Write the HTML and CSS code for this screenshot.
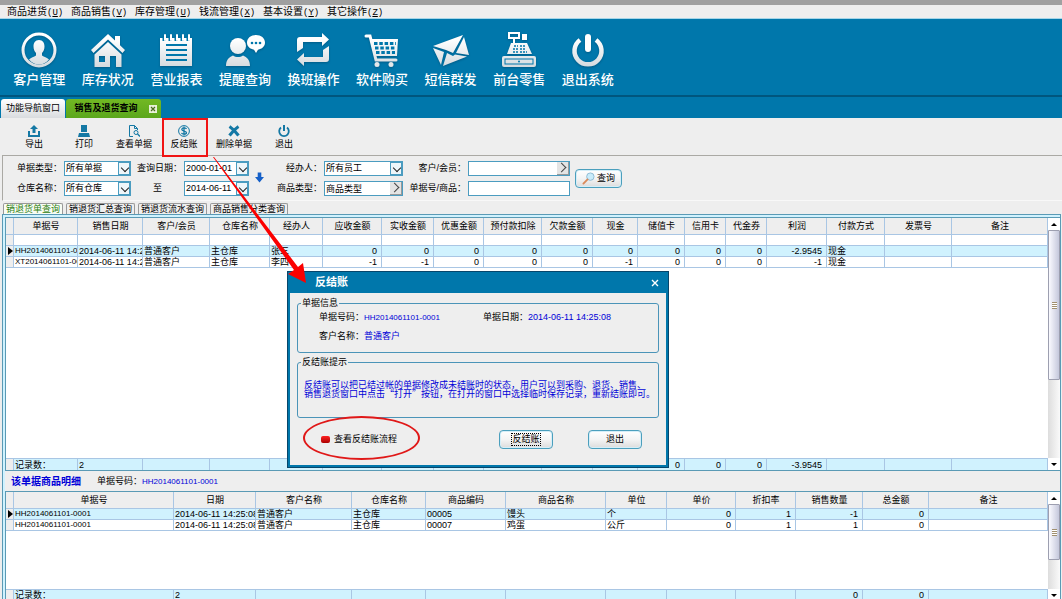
FILE: index.html
```html
<!DOCTYPE html>
<html lang="zh-CN">
<head>
    <meta charset="UTF-8">
    <meta name="viewport" content="width=device-width, initial-scale=1.0">
    <title>销售及退货查询</title>
    <link rel="stylesheet" href="styles.css">
</head>
<body>

<!-- shared gradient for the big toolbar icons -->
<svg class="defs" width="0" height="0" aria-hidden="true">
    <defs>
        <linearGradient id="silver" x1="0" y1="0" x2="0" y2="36" gradientUnits="userSpaceOnUse">
            <stop offset="0.2" stop-color="#ffffff"/>
            <stop offset="1" stop-color="#d3d9dd"/>
        </linearGradient>
    </defs>
</svg>

<nav class="menu-bar">
    <a href="#">商品进货<span>(<u>U</u>)</span></a>
    <a href="#">商品销售<span>(<u>V</u>)</span></a>
    <a href="#">库存管理<span>(<u>U</u>)</span></a>
    <a href="#">钱流管理<span>(<u>X</u>)</span></a>
    <a href="#">基本设置<span>(<u>Y</u>)</span></a>
    <a href="#">其它操作<span>(<u>Z</u>)</span></a>
</nav>

<header class="main-bar">
    <div class="main-items">
        <button class="main-btn">
            <svg viewBox="0 0 36 36"><circle cx="18" cy="18" r="16" fill="none" stroke="url(#silver)" stroke-width="3"/><path d="M18 8c-4 0-5.500 3-5.500 6.500 0 3 1 5 2.500 6.500v2.500c-2 1.500-5 2-7 4C11 31 14 32.500 18 32.500S25 31 28 27.500c-2-2-5-2.500-7-4V21c1.500-1.500 2.500-3.500 2.500-6.500C23.500 11 22 8 18 8z" fill="url(#silver)"/></svg>
            客户管理
        </button>
        <button class="main-btn">
            <svg viewBox="0 0 36 36"><path d="M18 2 1 18l2.500 3L18 7.500 32.500 21l2.500-3-5-4.700V4h-5v4.500z" fill="url(#silver)"/><path d="M18 10 4.500 22.500V35H20V24h6v11h5.500V22.500zM9 24h6v6H9z" fill="url(#silver)"/></svg>
            库存状况
        </button>
        <button class="main-btn">
            <svg viewBox="0 0 36 36"><path d="M2 6h32v28H2z" fill="url(#silver)"/><path d="M8 13h21M8 18h21M8 23h21M8 28h21" stroke="#0077ab" stroke-width="2"/><path d="M6 5v4M12 5v4M18 5v4M24 5v4M30 5v4" stroke="#0077ab" stroke-width="3"/><path d="M7 3v5M13 3v5M19 3v5M25 3v5M31 3v5" stroke="#fff" stroke-width="2" stroke-linecap="round"/></svg>
            营业报表
        </button>
        <button class="main-btn">
            <svg viewBox="0 0 40 36"><circle cx="13" cy="14" r="8" fill="url(#silver)"/><path d="M1 34c0-6 3-9 7-10.500 3 2 7 2 10 0C22 25 25 28 25 34z" fill="url(#silver)"/><path d="M31 3c5 0 9 3 9 7.500 0 4-3 6.500-7 7.200L31 21l-2-3.300c-4-.7-7-3.200-7-7.200C22 6 26 3 31 3z" fill="#fff"/><g fill="#0077ab"><circle cx="27" cy="11" r="1.300"/><circle cx="31" cy="11" r="1.300"/><circle cx="35" cy="11" r="1.300"/></g></svg>
            提醒查询
        </button>
        <button class="main-btn">
            <svg viewBox="0 0 36 36"><path d="M2 20V8q0-3 3-3h22V1l7 6.500-7 6.500v-4H8v6z" fill="url(#silver)"/><path d="M34 14v13q0 3-3 3H9v4l-7-6.500L9 21v4h19v-7z" fill="url(#silver)"/></svg>
            换班操作
        </button>
        <button class="main-btn">
            <svg viewBox="0 0 36 36"><path d="M2 4h4l6 24h20" fill="none" stroke="url(#silver)" stroke-width="3" stroke-linecap="round"/><path d="M7 7h27l-1 17H11z" fill="url(#silver)"/><path d="M10 11.500h22M11 16h21M12 20.500h19" stroke="#0077ab" stroke-width="3" stroke-dasharray="3.500 1.800"/><circle cx="13" cy="32.500" r="2.500" fill="#e4e8ea"/><circle cx="27" cy="32.500" r="2.500" fill="#e4e8ea"/></svg>
            软件购买
        </button>
        <button class="main-btn">
            <svg viewBox="0 0 36 36"><path d="M0 14 30 3l-10 18-7-3z" fill="url(#silver)"/><path d="M0 16l11 4-3 13zM31 5l5 18-13-2z" fill="url(#silver)"/><path d="M10 34l4-13 6 3 2-1.500 12 2z" fill="url(#silver)"/></svg>
            短信群发
        </button>
        <button class="main-btn">
            <svg viewBox="0 0 36 36"><path d="M8 1h10v5H8zM13 6v6" fill="none" stroke="#fff" stroke-width="2"/><path d="M21 2h5v6h-5z" fill="#fff"/><path d="M10 11h16l5 11H6z" fill="url(#silver)"/><path d="M13 14h4M19 14h6M12 17h5M19 17h6M12 20h5M19 20h7" stroke="#0077ab" stroke-width="1.500" stroke-dasharray="2 1"/><rect x="1" y="24" width="34" height="11" rx="2" fill="url(#silver)"/><rect x="4" y="27" width="28" height="5" fill="none" stroke="#0077ab" stroke-width="1"/><circle cx="18" cy="29.500" r="1" fill="#0077ab"/></svg>
            前台零售
        </button>
        <button class="main-btn">
            <svg viewBox="0 0 36 36"><path d="M10 8A13.500 13.500 0 1 0 26 8" fill="none" stroke="url(#silver)" stroke-width="4.500"/><path d="M18 5v12" stroke="#fff" stroke-width="6" stroke-linecap="round"/></svg>
            退出系统
        </button>
    </div>
</header>

<div class="page-tabs">
    <button class="page-tab">功能导航窗口</button>
    <div class="page-tab active">销售及退货查询
        <button class="tab-close" aria-label="关闭"><svg viewBox="0 0 8 8"><path d="M2 2l4 4M6 2 2 6" stroke="#4a6b20" stroke-width="1.200"/></svg></button>
    </div>
</div>

<div class="tool-bar">
    <button class="tool"><svg viewBox="0 0 12 12"><path d="M6 0l4 4H7.500v4h-3V4H2z"/><path d="M0 6h2v4h8V6h2v6H0z"/></svg>导出</button>
    <button class="tool"><svg viewBox="0 0 12 12"><path d="M3 0h6v7H3zM1 8h10l1 4H0z"/></svg>打印</button>
    <button class="tool"><svg viewBox="0 0 12 12"><path d="M1.500.5h5l3 3V5M5 11.500H1.500V.5M6.500.5v3h3" fill="none" stroke="#1478a4"/><circle cx="8" cy="7.500" r="2" fill="none" stroke="#1478a4"/><path d="M9.500 9 12 11.500" stroke="#1478a4" stroke-width="1.300"/></svg>查看单据</button>
    <button class="tool"><svg viewBox="0 0 12 12"><circle cx="6" cy="6" r="5.400" fill="none" stroke="#1478a4"/><path d="M8.500 4C8 2.500 3.800 2.500 3.800 4.400S8.500 5.800 8.500 7.700 4 9.600 3.500 7.900M6 1.500v9" fill="none" stroke="#1478a4" stroke-width="1.300"/></svg>反结账</button>
    <button class="tool"><svg viewBox="0 0 12 12"><path d="M1.500 1.500c3 2 6 5 9 9M10.500 1.500c-3 2-6 5-9 9" fill="none" stroke="#1478a4" stroke-width="3"/></svg>删除单据</button>
    <button class="tool"><svg viewBox="0 0 12 12"><path d="M3 2.500a4.800 4.800 0 1 0 6 0" fill="none" stroke="#1478a4" stroke-width="1.800"/><path d="M6 0v6" stroke="#1478a4" stroke-width="2"/></svg>退出</button>
</div>

<form class="filters">
    <label for="billType">单据类型：</label>
    <span class="combo"><select id="billType"><option>所有单据</option></select><i class="drop"></i></span>
    <label for="dateFrom">查询日期：</label>
    <span class="combo date"><select id="dateFrom"><option>2000-01-01</option></select><i class="drop"></i></span>
    <svg class="down-arrow" viewBox="0 0 10 12"><path d="M3 0h4v5h3l-5 6-5-6h3z" fill="#1560c8"/></svg>
    <label for="staff">经办人：</label>
    <span class="combo"><select id="staff"><option>所有员工</option></select><i class="drop"></i></span>
    <label for="client">客户/会员：</label>
    <span class="combo"><input id="client" type="text"><button type="button" class="pick" aria-label="选择客户"></button></span>
    <button type="button" class="btn search"><svg viewBox="0 0 14 14"><circle cx="9" cy="5" r="4" fill="#c9ecfb" stroke="#8cb9d2"/><path d="M6 8l-4.500 4.500" stroke="#d98a5a" stroke-width="2" stroke-linecap="round"/></svg>查询</button>

    <label for="store">仓库名称：</label>
    <span class="combo"><select id="store"><option>所有仓库</option></select><i class="drop"></i></span>
    <label for="dateTo" class="to">至</label>
    <span class="combo date"><select id="dateTo"><option>2014-06-11</option></select><i class="drop"></i></span>
    <label for="goodsType">商品类型：</label>
    <span class="combo"><input id="goodsType" type="text" value="商品类型"><button type="button" class="pick" aria-label="选择类型"></button></span>
    <label for="billNo">单据号/商品：</label>
    <span class="combo"><input id="billNo" type="text"></span>
</form>

<div class="sub-tabs">
    <button class="active">销退货单查询</button>
    <button>销退货汇总查询</button>
    <button>销退货流水查询</button>
    <button>商品销售分类查询</button>
</div>

<main class="frame">
    <section class="grid-box bills">
        <table class="grid">
            <colgroup><col><col><col><col><col><col><col><col><col><col><col><col><col><col><col><col><col><col><col></colgroup>
            <thead>
                <tr><th></th><th>单据号</th><th>销售日期</th><th>客户/会员</th><th>仓库名称</th><th>经办人</th><th>应收金额</th><th>实收金额</th><th>优惠金额</th><th>预付款扣除</th><th>欠款金额</th><th>现金</th><th>储值卡</th><th>信用卡</th><th>代金券</th><th>利润</th><th>付款方式</th><th>发票号</th><th>备注</th></tr>
            </thead>
            <tbody>
                <tr><td></td><td></td><td></td><td></td><td></td><td></td><td></td><td></td><td></td><td></td><td></td><td></td><td></td><td></td><td></td><td></td><td></td><td></td><td></td></tr>
                <tr class="current"><td></td><td class="code">HH2014061101-0001</td><td>2014-06-11 14:25:08</td><td>普通客户</td><td>主仓库</td><td>张三</td><td class="num">0</td><td class="num">0</td><td class="num">0</td><td class="num">0</td><td class="num">0</td><td class="num">0</td><td class="num">0</td><td class="num">0</td><td class="num">0</td><td class="num">-2.9545</td><td>现金</td><td></td><td></td></tr>
                <tr><td></td><td class="code">XT2014061101-0001</td><td>2014-06-11 14:25:08</td><td>普通客户</td><td>主仓库</td><td>李四</td><td class="num">-1</td><td class="num">-1</td><td class="num">0</td><td class="num">0</td><td class="num">0</td><td class="num">-1</td><td class="num">0</td><td class="num">0</td><td class="num">0</td><td class="num">-1</td><td>现金</td><td></td><td></td></tr>
                <tr class="filler"><td colspan="19"></td></tr>
            </tbody>
            <tfoot>
                <tr><td></td><td>记录数：</td><td>2</td><td></td><td></td><td></td><td class="num">-1</td><td class="num">-1</td><td class="num">0</td><td class="num">0</td><td class="num">0</td><td class="num">-1</td><td class="num">0</td><td class="num">0</td><td class="num">0</td><td class="num">-3.9545</td><td></td><td></td><td></td></tr>
            </tfoot>
        </table>
        <div class="scroll"><i class="up"></i><div class="track"><div class="thumb"></div></div><i class="down"></i></div>
    </section>

    <div class="detail-head">
        <h2>该单据商品明细</h2>
        <span>单据号码：<span class="code">HH2014061101-0001</span></span>
    </div>

    <section class="grid-box details">
        <table class="grid">
            <colgroup><col><col><col><col><col><col><col><col><col><col><col><col><col></colgroup>
            <thead>
                <tr><th></th><th>单据号</th><th>日期</th><th>客户名称</th><th>仓库名称</th><th>商品编码</th><th>商品名称</th><th>单位</th><th>单价</th><th>折扣率</th><th>销售数量</th><th>总金额</th><th>备注</th></tr>
            </thead>
            <tbody>
                <tr class="current"><td></td><td class="code">HH2014061101-0001</td><td>2014-06-11 14:25:08</td><td>普通客户</td><td>主仓库</td><td>00005</td><td>馒头</td><td>个</td><td class="num">0</td><td class="num">1</td><td class="num">-1</td><td class="num">0</td><td></td></tr>
                <tr><td></td><td class="code">HH2014061101-0001</td><td>2014-06-11 14:25:08</td><td>普通客户</td><td>主仓库</td><td>00007</td><td>鸡蛋</td><td>公斤</td><td class="num">0</td><td class="num">1</td><td class="num">1</td><td class="num">0</td><td></td></tr>
                <tr class="filler"><td colspan="13"></td></tr>
            </tbody>
            <tfoot>
                <tr><td></td><td>记录数：</td><td>2</td><td></td><td></td><td></td><td></td><td></td><td></td><td></td><td class="num">0</td><td class="num">0</td><td></td></tr>
            </tfoot>
        </table>
        <div class="scroll"><i class="up"></i><div class="track"><div class="thumb"></div></div><i class="down"></i></div>
    </section>
</main>

<div class="dialog" role="dialog" aria-labelledby="dialogTitle">
    <div class="dialog-title">
        <h2 id="dialogTitle">反结账</h2>
        <button aria-label="关闭"><svg viewBox="0 0 8 8"><path d="M1 1l6 6M7 1 1 7" stroke="#fff" stroke-width="1.400"/></svg></button>
    </div>
    <div class="dialog-body">
        <fieldset class="info">
            <legend>单据信息</legend>
            <span>单据号码：<span class="code">HH2014061101-0001</span></span>
            <span>单据日期：<b>2014-06-11 14:25:08</b></span>
            <span>客户名称：<b>普通客户</b></span>
        </fieldset>
        <fieldset class="tip">
            <legend>反结账提示</legend>
            <p>反结账可以把已结过帐的单据修改成未结账时的状态，用户可以到采购、退货、销售、<br>销售退货窗口中点击“打开”按钮，在打开的窗口中选择临时保存记录，重新结账即可。</p>
        </fieldset>
        <div class="dialog-foot">
            <a href="#" class="flow-link">查看反结账流程</a>
            <button class="btn"><span class="focus">反结账</span></button>
            <button class="btn">退出</button>
        </div>
    </div>
</div>

<!-- red marks over the window -->
<div class="mark-box"></div>
<svg class="mark-arrow" width="96" height="130" viewBox="0 0 96 130"><path d="M1 1h1l84 110 5-4 3 20-18-9 6-4z" fill="#fb0000"/></svg>
<div class="mark-ring"></div>

</body>
</html>
```

FILE: styles.css
```css
:root {
    --blue: #0077ab;
    --line: #a9c6e4;
    --teal: #5a9ab5;
    --panel: #eeeeee;
    --row: #d0f2fe;
    --ink: #0000d8;
}

* {
    box-sizing: border-box;
}

body {
    margin: 0;
    height: 100vh;
    min-height: 560px;
    display: flex;
    flex-direction: column;
    overflow: hidden;
    position: relative;
    background: var(--panel);
    color: #000;
    font-family: "Liberation Sans", "Noto Sans CJK SC", sans-serif;
    font-size: 9px;
    line-height: 11px;
    border-top: 5px solid #a0a0a0;
}

button, input, select {
    font: inherit;
    color: inherit;
    margin: 0;
    padding: 0;
    border: 0;
    background: none;
    white-space: nowrap;
}

a {
    color: inherit;
    text-decoration: none;
}

h2 {
    margin: 0;
    font-size: 10px;
}

.defs {
    position: absolute;
}

.code {
    font-size: 8px;
}

/* menu */
.menu-bar {
    display: flex;
    gap: 8px;
    height: 14px;
    padding-left: 7px;
    border-bottom: 1px solid #a5d5e8;
    font-size: 10px;
    line-height: 13px;
}

.menu-bar span {
    display: inline-block;
    width: 16px;
    font-family: "Liberation Mono", monospace;
    font-size: 9px;
}

/* big toolbar */
.main-bar {
    height: 78px;
    background: var(--blue);
    border-bottom: 2px solid #00567e;
}

.main-items {
    display: grid;
    grid-template-columns: repeat(9, 1fr);
    width: 617px;
    max-width: 100%;
    margin-left: 5px;
}

.main-btn {
    display: flex;
    flex-direction: column;
    align-items: center;
    gap: 3px;
    padding-top: 13px;
    color: #fff;
    font-size: 13px;
    font-weight: 500;
    line-height: 18px;
}

.main-btn svg {
    height: 36px;
    filter: drop-shadow(0 1px 1px rgba(0, 50, 80, 0.4));
}

/* window tabs */
.page-tabs {
    display: flex;
    align-items: flex-end;
    gap: 1px;
    height: 21px;
    padding-left: 1px;
    background: var(--blue);
}

.page-tab {
    display: flex;
    align-items: center;
    justify-content: center;
    width: 64px;
    height: 19px;
    border-radius: 3px 3px 0 0;
    background: linear-gradient(#fff, #d9dcdf);
}

.page-tab.active {
    width: 95px;
    gap: 11px;
    padding-left: 4px;
    background: linear-gradient(#72b823, #5ba71c);
    font-weight: bold;
}

.tab-close {
    width: 8px;
    height: 8px;
    background: #e8f0d8;
}

.tab-close svg {
    display: block;
}

/* small toolbar */
.tool-bar {
    display: flex;
    height: 37px;
    padding-left: 9px;
}

.tool {
    display: flex;
    flex-direction: column;
    align-items: center;
    gap: 2px;
    width: 50px;
    padding-top: 7px;
}

.tool svg {
    width: 12px;
    height: 12px;
    fill: #1478a4;
}

/* filters */
.filters {
    display: grid;
    grid-template-columns: 55px 67px 49px 65px 16px 53px 79px 61px 102px auto;
    grid-template-rows: 16px 16px;
    gap: 4px 2px;
    justify-content: start;
    align-items: center;
    height: 46px;
    margin: 0 0 0 2px;
    padding: 4px;
    border-top: 1px solid #aaa9a4;
    border-left: 1px solid #aaa9a4;
    border-bottom: 1px solid #f8f8f8;
}

.filters label {
    text-align: right;
    white-space: nowrap;
}

.filters .to {
    text-align: center;
}

.down-arrow {
    grid-row: span 2;
    justify-self: center;
    width: 9px;
    height: 12px;
}

.search {
    grid-row: span 2;
}

.combo {
    display: flex;
    align-items: center;
    position: relative;
    height: 15px;
    border: 1px solid #4b9cc0;
    background: #fff;
}

.combo select,
.combo input {
    appearance: none;
    flex: 1;
    min-width: 0;
    width: 100%;
    height: 13px;
    padding: 0 1px;
    outline: 0;
}

.drop {
    position: absolute;
    right: 0;
    top: 0;
    width: 12px;
    height: 13px;
    border: 1px solid #4b9cc0;
    background: #eef6fa;
    pointer-events: none;
}

.drop::after {
    content: "";
    position: absolute;
    left: 3px;
    top: 2px;
    width: 5px;
    height: 5px;
    border: solid #222;
    border-width: 0 1px 1px 0;
    transform: rotate(45deg);
}

.pick {
    flex: none;
    width: 12px;
    height: 13px;
    background: #e4e4e4;
    border: 1px solid #999;
    border-width: 0 1px 1px 0;
}

.pick::after {
    content: "";
    display: block;
    width: 6px;
    height: 6px;
    margin-left: 1px;
    border: solid #444;
    border-width: 1px 1px 0 0;
    transform: rotate(45deg);
}

.btn {
    display: flex;
    align-items: center;
    justify-content: center;
    height: 19px;
    border: 1px solid #4b9fbd;
    border-radius: 4px;
    background: linear-gradient(#fff, #f4f4f4 50%, #dcdcdc);
    box-shadow: inset 0 0 0 1px #d5eef8;
}

.btn.search {
    gap: 2px;
    width: 47px;
    margin-left: 3px;
}

.search svg {
    width: 13px;
    height: 13px;
}

/* query tabs */
.sub-tabs {
    display: flex;
    gap: 3px;
    height: 13px;
    padding: 2px 0 0 3px;
}

.sub-tabs button {
    height: 11px;
    padding: 0 2px;
    border: 1px solid #999;
    border-bottom: 0;
    border-radius: 2px 2px 0 0;
    line-height: 10px;
}

.sub-tabs .active {
    color: #2e8010;
    background: #f8fcf4;
}

/* grids */
.frame {
    flex: 1;
    min-height: 0;
    display: flex;
    flex-direction: column;
    margin: 0 1px 0 2px;
    border: 1px solid var(--teal);
    border-bottom: 0;
    padding: 2px 0 0 2px;
    background: var(--row);
}

.grid-box {
    display: grid;
    grid-template-columns: minmax(0, 1fr) 12px;
    border: 1px solid var(--teal);
    border-right: 0;
    background: #fff;
    overflow: hidden;
}

.bills {
    flex: 1;
    min-height: 0;
}

/* last row runs under the window edge */
.details {
    flex: none;
    height: 110px;
    margin-bottom: -2px;
    border-bottom: 0;
}

.grid {
    width: 100%;
    height: 100%;
    table-layout: fixed;
    border-spacing: 0;
}

.grid th,
.grid td {
    height: 11px;
    padding: 0 0 0 1px;
    border-right: 1px solid var(--line);
    border-bottom: 1px solid var(--line);
    line-height: 10px;
    overflow: hidden;
    white-space: nowrap;
}

.grid th {
    height: 17px;
    background: var(--panel);
    font-weight: normal;
    line-height: 15px;
}

.grid td:first-child {
    padding: 0;
    background: var(--panel);
}

.grid .num {
    padding-right: 4px;
    text-align: right;
}

.grid .current td {
    background: var(--row);
}

.grid .current td:first-child {
    background: var(--panel);
}

/* pointer at the current row */
.grid .current td:first-child::before {
    content: "";
    display: block;
    width: 0;
    margin-left: 2px;
    border: 4px solid transparent;
    border-left: 5px solid #000;
    border-right: 0;
}

.grid .filler td {
    height: auto;
    border-right: 0;
    background: #fff;
}

.grid tfoot td {
    background: var(--row);
}

.grid tfoot td:first-child {
    background: var(--panel);
}

.bills tfoot td {
    border-bottom: 0;
}

.bills col:nth-child(1) { width: 8px; }
.bills col:nth-child(2) { width: 64px; }
.bills col:nth-child(3) { width: 65px; }
.bills col:nth-child(4) { width: 67px; }
.bills col:nth-child(5) { width: 60px; }
.bills col:nth-child(6) { width: 53px; }
.bills col:nth-child(7) { width: 59px; }
.bills col:nth-child(8) { width: 52px; }
.bills col:nth-child(9) { width: 50px; }
.bills col:nth-child(10) { width: 58px; }
.bills col:nth-child(11) { width: 51px; }
.bills col:nth-child(12) { width: 45px; }
.bills col:nth-child(13) { width: 47px; }
.bills col:nth-child(14) { width: 41px; }
.bills col:nth-child(15) { width: 41px; }
.bills col:nth-child(16) { width: 60px; }
.bills col:nth-child(17) { width: 58px; }
.bills col:nth-child(18) { width: 67px; }

.details col:nth-child(1) { width: 8px; }
.details col:nth-child(2) { width: 160px; }
.details col:nth-child(3) { width: 82px; }
.details col:nth-child(4) { width: 96px; }
.details col:nth-child(5) { width: 74px; }
.details col:nth-child(6) { width: 80px; }
.details col:nth-child(7) { width: 100px; }
.details col:nth-child(8) { width: 61px; }
.details col:nth-child(9) { width: 69px; }
.details col:nth-child(10) { width: 60px; }
.details col:nth-child(11) { width: 67px; }
.details col:nth-child(12) { width: 66px; }

.scroll {
    display: flex;
    flex-direction: column;
    background: linear-gradient(to right, #ddd, #fafafa);
}

.scroll i {
    display: flex;
    align-items: center;
    justify-content: center;
    height: 12px;
    background: #fff;
}

.scroll i::after {
    content: "";
    width: 0;
    border: 3px solid transparent;
}

.scroll .up::after {
    border-top: 0;
    border-bottom-color: #000;
}

.scroll .down::after {
    border-bottom: 0;
    border-top-color: #000;
}

.track {
    flex: 1;
}

.thumb {
    display: flex;
    align-items: center;
    justify-content: center;
    height: 66%;
    border: 1px solid #9d9fb0;
    border-radius: 1px;
    background: linear-gradient(to right, #fafaff, #c5c8dc);
}

.thumb::after {
    content: "";
    width: 5px;
    height: 7px;
    background: repeating-linear-gradient(#a08f70 0 1px, #fff 1px 2px);
}

.detail-head {
    display: flex;
    flex: none;
    align-items: center;
    gap: 16px;
    height: 20px;
    padding-left: 6px;
    background: var(--panel);
}

.detail-head h2,
.detail-head .code {
    color: var(--ink);
}

/* dialog */
.dialog {
    position: absolute;
    left: 287px;
    top: 266px;
    width: 382px;
    border: 1px solid #06466b;
    background: var(--panel);
}

.dialog-title {
    display: flex;
    align-items: center;
    justify-content: space-between;
    height: 21px;
    padding: 0 9px 0 27px;
    background: var(--blue);
    color: #fff;
}

.dialog-title h2 {
    font-size: 11px;
}

.dialog-title button {
    width: 8px;
    height: 8px;
}

.dialog-title svg {
    display: block;
}

.dialog-body {
    padding: 5px 7px 16px;
    border: 2px solid var(--blue);
    border-top: 0;
}

.dialog fieldset {
    min-width: 0;
    margin: 0;
    border: 1px solid #4b94b8;
    border-radius: 3px;
}

.dialog legend {
    padding: 0 1px;
}

.dialog .info {
    display: grid;
    grid-template-columns: 164px auto;
    gap: 8px 0;
    align-content: start;
    height: 55px;
    padding: 3px 0 0 21px;
}

/* the legends start left of the fieldset text */
.info legend {
    margin-left: -18px;
}

.tip legend {
    margin-left: -3px;
}

.dialog .tip {
    height: 61px;
    margin-top: 4px;
    padding: 12px 0 0 6px;
}

.dialog b,
.dialog .code,
.tip p {
    color: var(--ink);
    font-weight: normal;
}

.tip p {
    margin: 0;
    font-family: "Noto Sans CJK SC", sans-serif;
    line-height: 9px;
    white-space: nowrap;
}

.dialog-foot {
    display: flex;
    align-items: center;
    gap: 35px;
    padding: 12px 17px 0 24px;
}

.dialog-foot .btn {
    width: 54px;
}

.flow-link {
    display: flex;
    align-items: center;
    gap: 4px;
    margin-right: auto;
}

.flow-link::before {
    content: "";
    width: 9px;
    height: 7px;
    border-radius: 2px;
    background: linear-gradient(#f22, #a00);
}

.focus {
    outline: 1px dotted #000;
}

/* red marks */
.mark-box,
.mark-arrow,
.mark-ring {
    position: absolute;
    pointer-events: none;
}

.mark-box {
    left: 162px;
    top: 113px;
    width: 46px;
    height: 39px;
    border: 2px solid #f01414;
}

.mark-arrow {
    left: 212px;
    top: 151px;
}

.mark-ring {
    left: 303px;
    top: 411px;
    width: 117px;
    height: 44px;
    border: 2px solid #e01818;
    border-radius: 50%;
}
```
